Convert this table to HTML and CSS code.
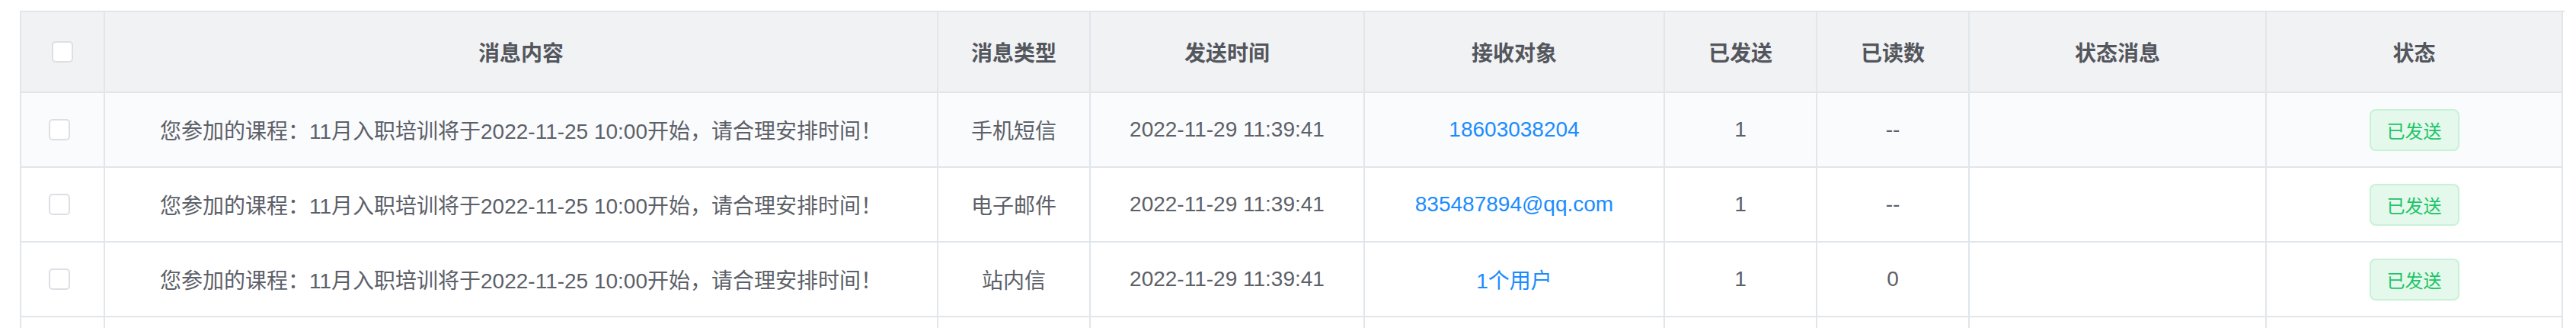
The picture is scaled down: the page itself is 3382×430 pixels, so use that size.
FILE: index.html
```html
<!DOCTYPE html>
<html lang="zh-CN">
<head>
<meta charset="utf-8">
<title>消息列表</title>
<link rel="stylesheet" href="styles.css">
</head>
<body>
<div class="table-wrap">
  <div class="table" role="table">
    <div class="tr thead" role="row">
      <div class="cell cell-check" role="columnheader"><span class="checkbox"></span></div>
      <div class="cell" role="columnheader">消息内容</div>
      <div class="cell" role="columnheader">消息类型</div>
      <div class="cell" role="columnheader">发送时间</div>
      <div class="cell" role="columnheader">接收对象</div>
      <div class="cell" role="columnheader">已发送</div>
      <div class="cell" role="columnheader">已读数</div>
      <div class="cell" role="columnheader">状态消息</div>
      <div class="cell" role="columnheader">状态</div>
    </div>
    <div class="tr trow trow-hover" role="row">
      <div class="cell cell-check body-check"><span class="checkbox"></span></div>
      <div class="cell">您参加的课程：11月入职培训将于2022-11-25 10:00开始，请合理安排时间！</div>
      <div class="cell">手机短信</div>
      <div class="cell">2022-11-29 11:39:41</div>
      <div class="cell"><a class="link">18603038204</a></div>
      <div class="cell">1</div>
      <div class="cell">--</div>
      <div class="cell"></div>
      <div class="cell"><span class="tag tag-success">已发送</span></div>
    </div>
    <div class="tr trow" role="row">
      <div class="cell cell-check body-check"><span class="checkbox"></span></div>
      <div class="cell">您参加的课程：11月入职培训将于2022-11-25 10:00开始，请合理安排时间！</div>
      <div class="cell">电子邮件</div>
      <div class="cell">2022-11-29 11:39:41</div>
      <div class="cell"><a class="link">835487894@qq.com</a></div>
      <div class="cell">1</div>
      <div class="cell">--</div>
      <div class="cell"></div>
      <div class="cell"><span class="tag tag-success">已发送</span></div>
    </div>
    <div class="tr trow" role="row">
      <div class="cell cell-check body-check"><span class="checkbox"></span></div>
      <div class="cell">您参加的课程：11月入职培训将于2022-11-25 10:00开始，请合理安排时间！</div>
      <div class="cell">站内信</div>
      <div class="cell">2022-11-29 11:39:41</div>
      <div class="cell"><a class="link">1个用户</a></div>
      <div class="cell">1</div>
      <div class="cell">0</div>
      <div class="cell"></div>
      <div class="cell"><span class="tag tag-success">已发送</span></div>
    </div>
    <div class="tr trow" role="row">
      <div class="cell"></div>
      <div class="cell"></div>
      <div class="cell"></div>
      <div class="cell"></div>
      <div class="cell"></div>
      <div class="cell"></div>
      <div class="cell"></div>
      <div class="cell"></div>
      <div class="cell"></div>
    </div>
  </div>
</div>
</body>
</html>
```

FILE: styles.css
```css
html, body {
  margin: 0;
  padding: 0;
  background: #ffffff;
  overflow: hidden;
}

body {
  font-family: "Liberation Sans", "Noto Sans CJK SC", sans-serif;
  font-size: 28px;
  color: #5c6068;
}

.table-wrap {
  padding: 14px 0 0 26px;
}

.table {
  width: 3339px;
  border-left: 2px solid #e1e6eb;
  border-top: 2px solid #e1e6eb;
}

.tr {
  display: grid;
  grid-template-columns: 110px 1094px 200px 360px 394px 200px 200px 390px 389px;
}

.cell {
  box-sizing: border-box;
  border-right: 2px solid #e1e6eb;
  border-bottom: 2px solid #e1e6eb;
  display: flex;
  align-items: center;
  justify-content: center;
  white-space: nowrap;
}

.thead .cell {
  height: 106px;
  background: #f1f2f4;
  color: #53565c;
  font-weight: bold;
}

.trow .cell {
  height: 98px;
  background: #ffffff;
}

.trow-hover .cell {
  background: #fafbfc;
}

.body-check {
  padding-right: 8px;
}

.checkbox {
  box-sizing: border-box;
  width: 28px;
  height: 28px;
  border: 2px solid #dcdfe4;
  border-radius: 5px;
  background: #ffffff;
}

.link {
  color: #1a8cff;
  text-decoration: none;
}

.tag {
  box-sizing: border-box;
  height: 55px;
  padding: 0 21px;
  display: inline-flex;
  align-items: center;
  border-radius: 8px;
  font-size: 24px;
}

.tag-success {
  color: #1ec468;
  background: #e5f8ec;
  border: 2px solid #c9f1d8;
}
```
